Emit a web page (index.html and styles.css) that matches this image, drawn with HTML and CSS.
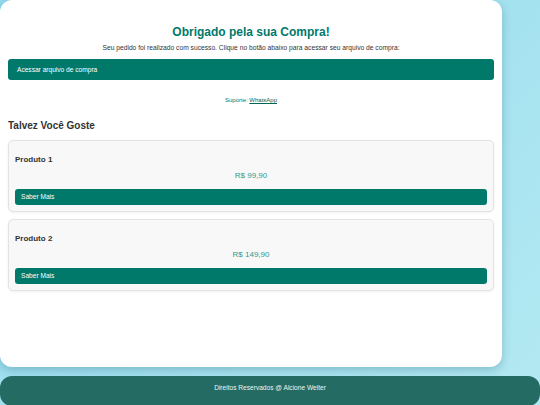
FILE: index.html
```html
<!DOCTYPE html>
<html lang="pt-BR">
<head>
  <meta charset="UTF-8">
  <meta name="viewport" content="width=device-width, initial-scale=1.0">
  <title>Obrigado pela sua Compra</title>
  <link rel="stylesheet" href="styles.css">
</head>
<body>
  <div class="container">
    <h1>Obrigado pela sua Compra!</h1>
    <p class="intro">Seu pedido foi realizado com sucesso. Clique no botão abaixo para acessar seu arquivo de compra:</p>
    <a href="#" class="btn btn-main">Acessar arquivo de compra</a>
    <p class="support">Suporte: <a href="#">WhatsApp</a></p>

    <h2>Talvez Você Goste</h2>
    <div class="product">
      <h3>Produto 1</h3>
      <p class="price">R$ 99,90</p>
      <a href="#" class="btn btn-small">Saber Mais</a>
    </div>
    <div class="product">
      <h3>Produto 2</h3>
      <p class="price">R$ 149,90</p>
      <a href="#" class="btn btn-small">Saber Mais</a>
    </div>
  </div>

  <footer class="footer">
    Direitos Reservados @ Alcione Welter
  </footer>
</body>
</html>
```

FILE: styles.css
```css
body {
  font-family: "Liberation Sans", Arial, sans-serif;
  margin: 0;
  padding: 0;
  height: 405px;
  overflow: hidden;
  background: linear-gradient(135deg, #93d9ee, #b3e9f2);
}
.container {
  width: 502px;
  min-height: 367px;
  box-sizing: border-box;
  padding: 24px 8px 0;
  background-color: #fff;
  border-radius: 12px;
  box-shadow: 0 3px 10px rgba(0, 60, 90, 0.25);
}
h1 {
  margin: 0;
  font-size: 12px;
  line-height: 16px;
  text-align: center;
  color: #00796b;
}
.intro {
  margin: 3px 0 0;
  font-size: 6.7px;
  line-height: 9px;
  text-align: center;
  color: #333;
}
.btn {
  display: block;
  color: #fff;
  text-decoration: none;
  background-color: #00796b;
  border-radius: 3px;
}
.btn-main {
  margin-top: 7px;
  padding: 0 9px;
  height: 21px;
  line-height: 21px;
  font-size: 6.6px;
}
.support {
  margin: 16px 0 0;
  font-size: 6px;
  line-height: 8px;
  text-align: center;
  color: #00796b;
}
.support a {
  color: #00665a;
}
h2 {
  margin: 16px 0 0;
  font-size: 10px;
  line-height: 12px;
  color: #333;
}
.product {
  margin-top: 8px;
  padding: 14px 6px 6px;
  background-color: #f8f8f8;
  border: 1px solid #e3e3e3;
  border-radius: 5px;
  box-shadow: 0 1px 3px rgba(0, 0, 0, 0.06);
}
.product + .product {
  margin-top: 7px;
}
.product h3 {
  margin: 0;
  font-size: 8px;
  line-height: 10px;
  color: #333;
}
.price {
  margin: 6px 0 0;
  font-size: 8px;
  line-height: 10px;
  text-align: center;
  color: #2a9d8f;
}
.btn-small {
  margin-top: 8px;
  padding: 0 6px;
  height: 16px;
  line-height: 16px;
  font-size: 6.6px;
}
.footer {
  margin-top: 9px;
  padding: 8px 0 14px;
  font-size: 6.6px;
  line-height: 8px;
  text-align: center;
  color: #eef5f4;
  background-color: #246b63;
  border-radius: 12px;
}
```
